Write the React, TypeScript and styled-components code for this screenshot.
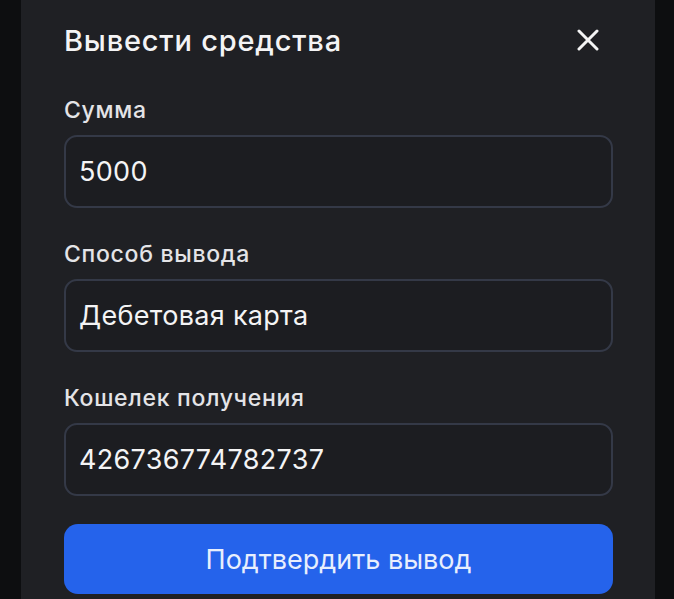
import React, { useState } from 'react';
import styled, { createGlobalStyle } from 'styled-components';

const GlobalStyle = createGlobalStyle`
  html, body {
    margin: 0;
    padding: 0;
    background-color: #0d0e10;
    font-family: Inter, 'Noto Sans', 'Liberation Sans', sans-serif;
    -webkit-font-smoothing: antialiased;
  }
`;

const Screen = styled.div`
  display: flex;
  width: 674px;
  height: 599px;
  overflow: hidden;
  background-color: #0d0e10;
`;

const Sheet = styled.div`
  display: flex;
  flex-direction: column;
  box-sizing: border-box;
  width: 634px;
  margin-left: 21px;
  padding: 0 42px 0 43px;
  background-color: #1f2024;
`;

const Header = styled.div`
  display: flex;
  justify-content: space-between;
  align-items: center;
  height: 80px;
`;

const Title = styled.div`
  color: #f4f4f5;
  font-size: 29px;
  font-weight: 500;
  letter-spacing: 0.8px;
`;

const CloseBtn = styled.button`
  display: flex;
  align-items: center;
  justify-content: center;
  width: 34px;
  height: 34px;
  margin-right: 8px;
  padding: 0;
  border: none;
  background: none;
  color: #f4f4f5;
  cursor: pointer;
`;

const Field = styled.div<{ $first?: boolean }>`
  display: flex;
  flex-direction: column;
  margin-top: ${props => (props.$first ? '15px' : '31px')};
`;

const Label = styled.label`
  height: 30px;
  line-height: 30px;
  color: #e4e4e7;
  font-size: 23px;
  font-weight: 500;
  letter-spacing: 0.7px;
`;

const Input = styled.input`
  box-sizing: border-box;
  height: 73px;
  margin-top: 10px;
  padding: 0 13px;
  border: 2px solid #343947;
  border-radius: 13px;
  background-color: #1c1d21;
  color: #f4f4f5;
  font-family: inherit;
  font-size: 27px;
  letter-spacing: 0.3px;
  outline: none;
`;

const SubmitBtn = styled.button`
  height: 70px;
  margin-top: 28px;
  border: none;
  border-radius: 14px;
  background-color: #2563eb;
  color: #e8effd;
  font-family: inherit;
  font-size: 27px;
  font-weight: 400;
  cursor: pointer;
`;

const fields = [
  { id: 'amount', label: 'Сумма', value: '5000' },
  { id: 'method', label: 'Способ вывода', value: 'Дебетовая карта' },
  { id: 'wallet', label: 'Кошелек получения', value: '426736774782737' },
];

const App = () => {
  const [values, setValues] = useState<Record<string, string>>(
    Object.fromEntries(fields.map(f => [f.id, f.value])),
  );

  const onChange = (id: string, value: string) => {
    setValues({ ...values, [id]: value });
  };

  return (
    <>
      <GlobalStyle />
      <Screen>
        <Sheet>
          <Header>
            <Title>Вывести средства</Title>
            <CloseBtn aria-label="Закрыть">
              <svg width="22" height="22" viewBox="0 0 22 22" fill="none">
                <path
                  d="M2 2L20 20M20 2L2 20"
                  stroke="currentColor"
                  strokeWidth="3"
                  strokeLinecap="round"
                />
              </svg>
            </CloseBtn>
          </Header>
          {fields.map((f, i) => (
            <Field key={f.id} $first={i === 0}>
              <Label htmlFor={f.id}>{f.label}</Label>
              <Input
                id={f.id}
                value={values[f.id]}
                onChange={e => onChange(f.id, e.target.value)}
              />
            </Field>
          ))}
          <SubmitBtn>Подтвердить вывод</SubmitBtn>
        </Sheet>
      </Screen>
    </>
  );
};

export default App;
